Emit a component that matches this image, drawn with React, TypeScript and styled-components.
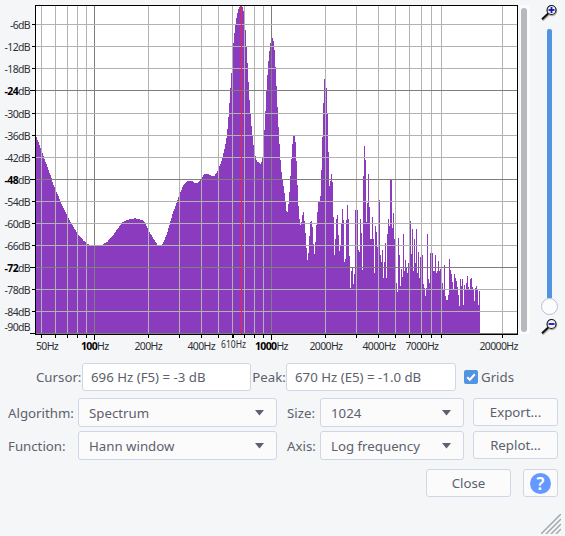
import React, { useState } from "react";
import styled, { createGlobalStyle } from "styled-components";

const GlobalStyle = createGlobalStyle`
  * { box-sizing: border-box; }
  body {
    margin: 0;
    background: #f5f6f8;
    overflow: hidden;
  }
`;

const Window = styled.div`
  width: 565px;
  height: 536px;
  display: flex;
  flex-direction: column;
  background: #f5f6f8;
  color: #5c616c;
  font-family: "Noto Sans", "Open Sans", sans-serif;
  font-size: 13.25px;
  line-height: 18px;
`;

const PlotArea = styled.div`
  display: flex;
  height: 363px;
`;

const ScrollTrack = styled.div`
  width: 10px;
  height: 329px;
  margin-top: 5px;
  padding: 3px 3px 3px 1px;
  background: #fcfcfc;
`;

const ScrollThumb = styled.div`
  width: 6px;
  height: 324px;
  border-radius: 3px;
  background: #b8b8bf;
`;

const ZoomColumn = styled.div`
  width: 35px;
  padding: 4px 0 0 11px;
  display: flex;
  flex-direction: column;
`;

const ZoomSlider = styled.div`
  width: 17px;
  height: 286px;
  margin: 8px 0 3px;
  display: flex;
  flex-direction: column;
  align-items: center;
`;

const SliderBar = styled.div`
  width: 5px;
  height: 270px;
  border-radius: 2px 2px 0 0;
  background: #5294e2;
`;

const SliderKnob = styled.div`
  width: 17px;
  height: 17px;
  flex: none;
  border: 1px solid #b7c0da;
  border-radius: 50%;
  background: #fcfcfc;
`;

const ReadoutRow = styled.div`
  display: flex;
  align-items: center;
  height: 28px;
  padding-left: 36px;
`;

const Label = styled.span<{ width?: number }>`
  flex: none;
  white-space: nowrap;
  width: ${({ width }) => (width ? width + "px" : "auto")};
`;

const Readout = styled.div<{ width: number }>`
  width: ${({ width }) => width}px;
  height: 28px;
  padding: 4px 8px;
  border: 1px solid #cfd6e6;
  border-radius: 3px;
  background: #ffffff;
  white-space: nowrap;
`;

const CheckLabel = styled.div`
  display: flex;
  align-items: center;
  gap: 3px;
  margin-left: 8px;
  cursor: pointer;
`;

const CheckBox = styled.div`
  width: 14px;
  height: 14px;
  border-radius: 2px;
  background: #5294e2;
  svg { display: block; }
`;

const Options = styled.div`
  display: grid;
  grid-template-columns: 70px 199px 10px 33px 144px 9px 85px;
  grid-template-rows: 29px 29px;
  row-gap: 4px;
  padding: 7px 0 0 8px;
`;

const OptionLabel = styled.div<{ col: number }>`
  grid-column: ${({ col }) => col};
  padding-top: 6px;
  white-space: nowrap;
`;

const Select = styled.div<{ col: number }>`
  grid-column: ${({ col }) => col};
  display: flex;
  align-items: center;
  justify-content: space-between;
  padding: 0 12px 0 10px;
  border: 1px solid #cfd6e6;
  border-radius: 3px;
  background: #fbfbfc;
  white-space: nowrap;
`;

const Button = styled.button<{ width: number; col?: number }>`
  ${({ col }) => (col ? `grid-column: ${col};` : "")}
  width: ${({ width }) => width}px;
  height: 28px;
  padding: 0;
  display: flex;
  align-items: center;
  justify-content: center;
  border: 1px solid #cfd6e6;
  border-radius: 3px;
  background: #fbfbfc;
  color: inherit;
  font: inherit;
`;

const Footer = styled.div`
  display: flex;
  gap: 12px;
  justify-content: flex-end;
  padding: 9px 7px 0 0;
`;

const GripRow = styled.div`
  display: flex;
  justify-content: flex-end;
  margin-top: auto;
  padding: 0 4px 2px 0;
  svg { display: block; }
`;

const PLOT_LEFT = 36;
const PLOT_TOP = 6;
const PLOT_BOTTOM = 334;

// low end of the curve is smooth, so only its knots are kept
const knots = [
  [36, 137], [51, 178], [53, 185], [57, 194], [62, 206], [68, 218], [73, 227], [78, 235],
  [83, 240.5], [87, 244], [91, 245.6], [99, 246], [102, 244.5], [107, 241.5], [112, 236], [117, 229],
  [121, 223], [126, 220], [131, 219], [135, 218.3], [138, 219], [142, 220.3], [145, 223.5], [149, 232],
  [153, 238.5], [156, 243], [158, 246], [161, 246], [163, 242], [166, 235], [169, 224.5], [172, 214],
  [175, 206], [179, 194.5], [183, 185], [187, 181.4], [192, 181.3], [194, 183], [197, 183], [200, 179.5],
  [203, 175], [205, 173.5], [207, 173.5], [211, 176], [214, 176], [217, 171], [219, 166], [221, 161],
  [224, 149], [226, 138],
];

// one top edge per pixel column from x = 227
const peaks = [
  129, 117, 103, 88, 73, 58, 43, 33, 24, 18, 13, 9, 7, 6, 6, 7, 11,
  20, 30, 47, 63, 82, 100, 114, 126, 136, 145, 151, 156, 160, 162, 162, 163, 164, 162, 158,
  144, 130, 111, 90, 75, 61, 51, 43, 42, 38, 41, 50, 67, 86, 107, 127, 144, 160, 172,
  180, 186, 193, 202, 211, 212, 204, 192, 176, 159, 144, 136, 136, 142, 161, 185, 206, 219, 225,
  222, 215, 212, 221, 233, 248, 260, 253, 236, 222, 221, 227, 244, 254, 242, 225, 212, 202, 202, 196,
  170, 137, 103, 79, 80, 88, 114, 152, 186, 181, 174, 182, 217, 255, 239, 219, 215, 235, 251, 245, 223,
  209, 220, 262, 259, 220, 205, 219, 256, 288, 271, 268, 284, 274, 210, 210, 210, 250, 252, 219, 233, 270,
  176, 146, 160, 222, 203, 174, 207, 239, 239, 217, 239, 273, 226, 232, 247, 230, 200,
  255, 262, 250, 278, 262, 243, 278, 234, 219, 226, 180, 180, 228, 213, 239, 260, 283, 292, 238, 255, 286,
  269, 277, 234, 271, 260, 268, 273, 263, 262, 221, 254, 229, 271, 239, 263, 229, 273, 252, 278, 257, 257,
  255, 284, 288, 296, 288, 234, 279, 283, 253, 253, 253, 271, 271, 255, 273, 271, 261, 271, 269, 272, 283,
  289, 265, 296, 300, 300, 295, 259, 270, 274, 282, 289, 274, 278, 281, 287, 295, 306, 279, 286, 279, 305,
  285, 289, 283, 276, 287, 290, 279, 278, 287, 289, 301, 288, 286, 290, 305, 291,
];

const buildTops = () => {
  const tops: number[] = [];
  for (let i = 0; i < knots.length - 1; i++) {
    const [x0, y0] = knots[i];
    const [x1, y1] = knots[i + 1];
    for (let x = x0; x < x1; x++) {
      tops.push(Math.round(y0 + ((y1 - y0) * (x - x0)) / (x1 - x0)));
    }
  }
  tops.push(138);
  return tops.concat(peaks);
};

const spectrumPath =
  `M${PLOT_LEFT} ${PLOT_BOTTOM}` + buildTops().map((y) => `V${y}h1`).join("") + `V${PLOT_BOTTOM}Z`;

const freqLines = [
  41, 55, 67, 77, 86, 94, 148, 179, 201, 218, 232, 244, 254, 263, 271,
  325, 356, 378, 395, 409, 421, 431, 441, 502,
];
const majorFreqs = [94, 271];

// y of the grid line, dB value
const levels = [
  [24, 6], [46, 12], [68, 18], [90, 24], [113, 30], [135, 36], [157, 42], [179, 48],
  [201, 54], [223, 60], [245, 66], [267, 72], [289, 78], [311, 84], [333, 90],
];
const majorLevels = [24, 48, 72];

// left edge, value, bold
const freqLabels: [number, string, boolean][] = [
  [36, "50", false], [81, "100", true], [134.5, "200", false], [187.5, "400", false],
  [255, "1000", true], [309.5, "2000", false], [362.5, "4000", false],
  [405.5, "7000", false], [479.5, "20000", false],
];

type AxisLabelProps = { x: number; y: number; value: string; unit: string; bold?: boolean; end?: boolean };

const AxisText = styled.text<{ $end?: boolean }>`
  font-size: 10.5px;
  letter-spacing: -0.65px;
  fill: #2e3033;
  text-anchor: ${({ $end }) => ($end ? "end" : "start")};

  tspan {
    font-weight: 700;
    fill: #000;
  }
`;

const AxisLabel = ({ x, y, value, unit, bold, end }: AxisLabelProps) => (
  <AxisText x={x} y={y} $end={end}>
    {bold ? <><tspan>{value}</tspan>{unit}</> : value + unit}
  </AxisText>
);

const Spectrum = ({ grids }: { grids: boolean }) => (
  <svg width="520" height="356" shapeRendering="crispEdges">
    <rect x="35" y="5" width="483" height="330" fill="#000" />
    <rect x={PLOT_LEFT} y={PLOT_TOP} width="481" height="328" fill="#fff" />
    <path d={spectrumPath} fill="#8b3bbd" />
    {grids && (
      <g>
        {freqLines.map((x) => (
          <rect key={x} x={x} y={PLOT_TOP} width="1" height="328" fill={majorFreqs.includes(x) ? "#7f7f7f" : "#b2b2b2"} />
        ))}
        {levels.map(([y, db]) => (
          <rect key={y} x={PLOT_LEFT} y={y} width="481" height="1" fill={majorLevels.includes(db) || db === 90 ? "#7f7f7f" : "#b2b2b2"} />
        ))}
      </g>
    )}
    <rect x="241" y="6" width="1" height="328" fill="#f02840" />
    <rect x="35" y="334" width="483" height="1" fill="#000" />
    {freqLines.map((x) => (
      <rect key={x} x={x} y="335" width="1" height={majorFreqs.includes(x) ? 5 : 3} fill="#000" />
    ))}
    <rect x="232" y="335" width="2" height="3" fill="#000" />
    {levels.map(([y, db]) => {
      const major = majorLevels.includes(db);
      const w = major || db === 90 ? 5 : 3;
      return (
        <g key={db}>
          <rect x={35 - w} y={y} width={w} height="1" fill="#000" />
          <AxisLabel x={30} y={db === 90 ? 330.5 : y + 4.5} value={"-" + db} unit="dB" bold={major} end />
        </g>
      );
    })}
    {freqLabels.map(([x, value, bold]) => (
      <AxisLabel key={value} x={x} y={349.5} value={value} unit="Hz" bold={bold} />
    ))}
    <text x="221" y="348" fontSize="10" fill="#2e3033" textLength="25" lengthAdjust="spacingAndGlyphs">610Hz</text>
  </svg>
);

const ZoomIcon = ({ plus }: { plus?: boolean }) => (
  <svg width="17" height="17" viewBox="0 0 17 17" style={{ display: "block", flex: "none" }}>
    <path d="M7.5 11 1.5 16.5" stroke="#b5b2ae" strokeWidth="2.2" />
    <circle cx="11" cy="7" r="4.5" fill="none" stroke="#b5b2ae" strokeWidth="1.5" />
    <path d="M7.2 9.5 1 15.2" stroke="#111" strokeWidth="2" />
    <circle cx="10.5" cy="6" r="4.5" fill="#eef1ff" stroke="#111" strokeWidth="1.1" />
    <path d="M7.5 6h6" stroke="#1c18a8" strokeWidth="1.8" />
    {plus && <path d="M10.5 3v6" stroke="#1c18a8" strokeWidth="1.8" />}
  </svg>
);

const Arrow = () => (
  <svg width="9" height="6" viewBox="0 0 9 6">
    <path d="M0 0h9L4.5 5.5Z" fill="#5c616c" />
  </svg>
);

const App = () => {
  const [grids, setGrids] = useState(true);

  return (
    <Window>
      <GlobalStyle />
      <PlotArea>
        <Spectrum grids={grids} />
        <ScrollTrack>
          <ScrollThumb />
        </ScrollTrack>
        <ZoomColumn>
          <ZoomIcon plus />
          <ZoomSlider>
            <SliderBar />
            <SliderKnob />
          </ZoomSlider>
          <ZoomIcon />
        </ZoomColumn>
      </PlotArea>

      <ReadoutRow>
        <Label width={46}>Cursor:</Label>
        <Readout width={169}>696 Hz (F5) = -3 dB</Readout>
        <Label width={35}>&#8202;Peak:</Label>
        <Readout width={170}>670 Hz (E5) = -1.0 dB</Readout>
        <CheckLabel onClick={() => setGrids(!grids)}>
          <CheckBox>
            {grids && (
              <svg width="14" height="14" viewBox="0 0 14 14">
                <path d="m3.2 7.2 2.6 2.5 5-5.4" fill="none" stroke="#fff" strokeWidth="2" />
              </svg>
            )}
          </CheckBox>
          <Label>Grids</Label>
        </CheckLabel>
      </ReadoutRow>

      <Options>
        <OptionLabel col={1}>Algorithm:</OptionLabel>
        <Select col={2}>Spectrum<Arrow /></Select>
        <OptionLabel col={4}>Size:</OptionLabel>
        <Select col={5}>1024<Arrow /></Select>
        <Button col={7} width={85}>Export...</Button>

        <OptionLabel col={1}>Function:</OptionLabel>
        <Select col={2}>Hann window<Arrow /></Select>
        <OptionLabel col={4}>Axis:</OptionLabel>
        <Select col={5}>Log frequency<Arrow /></Select>
        <Button col={7} width={85}>Replot...</Button>
      </Options>

      <Footer>
        <Button width={85}>Close</Button>
        <Button width={35}>
          <svg width="21" height="21" viewBox="0 0 21 21">
            <circle cx="10.5" cy="10.5" r="10.5" fill="#6699ff" />
            <text x="10.5" y="16.5" textAnchor="middle" fontSize="17" fontWeight="600" fill="#fff">?</text>
          </svg>
        </Button>
      </Footer>

      <GripRow>
        <svg width="20" height="20" viewBox="0 0 20 20">
          <path d="M0 20 20 0M5 20 20 5M10 20 20 10M15 20 20 15" stroke="#a3a8ad" strokeWidth="1.5" />
        </svg>
      </GripRow>
    </Window>
  );
};

export default App;
